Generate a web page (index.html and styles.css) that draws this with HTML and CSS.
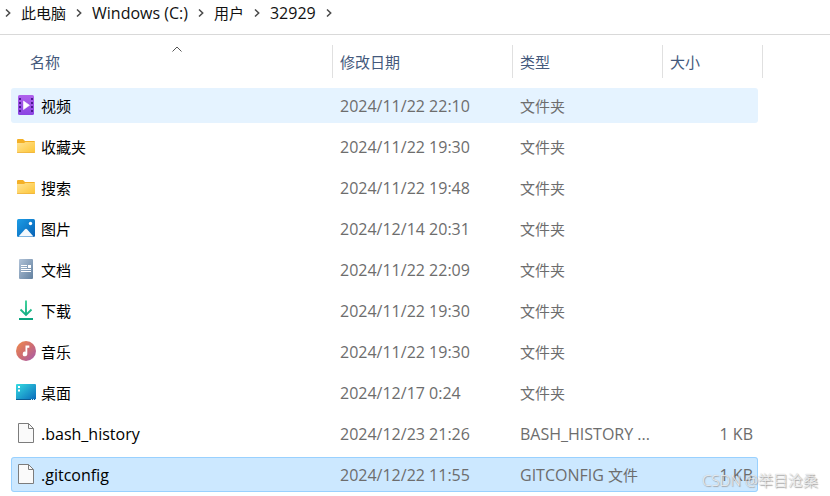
FILE: index.html
```
<!DOCTYPE html>
<html lang="zh-CN">
  <head>
    <meta charset="utf-8" />
    <meta name="viewport" content="width=device-width" />
    <title>32929</title>
    <link rel="stylesheet" href="styles.css">
  </head>
  <body>
    <!-- shared icons and gradients -->
    <svg class="defs" width="0" height="0" aria-hidden="true">
      <defs>
        <linearGradient id="g-video" x2="0" y2="1"><stop stop-color="#b062ec" /><stop offset="1" stop-color="#8b44e2" /></linearGradient>
        <linearGradient id="g-folder" x2="1" y2="1"><stop stop-color="#ffe394" /><stop offset="1" stop-color="#fdc535" /></linearGradient>
        <linearGradient id="g-picture" x2="1" y2="1"><stop stop-color="#1c9de6" /><stop offset="1" stop-color="#0761b5" /></linearGradient>
        <linearGradient id="g-doc" x2="1" y2="1"><stop stop-color="#b1c3d8" /><stop offset="1" stop-color="#62809f" /></linearGradient>
        <linearGradient id="g-down" x2="0" y2="20" gradientUnits="userSpaceOnUse"><stop stop-color="#3bd398" /><stop offset="1" stop-color="#08a27d" /></linearGradient>
        <linearGradient id="g-music" x2="1" y2="1"><stop stop-color="#f08c4c" /><stop offset=".5" stop-color="#cf6d70" /><stop offset="1" stop-color="#a359b0" /></linearGradient>
        <linearGradient id="g-desktop" x2="1" y2="1"><stop stop-color="#36dce2" /><stop offset="1" stop-color="#0869bb" /></linearGradient>
        <symbol id="chevron" viewBox="0 0 6 8"><path d="M1 .5 4.700 4 1 7.500" fill="none" stroke="#4a4a4a" stroke-width="1.500" /></symbol>
        <symbol id="folder" viewBox="0 0 20 20">
          <path d="M1 4a1 1 0 0 1 1-1h5l2 2h9a1 1 0 0 1 1 1v3H1z" fill="#f4b026" />
          <path d="M1 7h7l1.500-1H19v10a1 1 0 0 1-1 1H2a1 1 0 0 1-1-1z" fill="url(#g-folder)" />
          <path d="M1 16.500h18" stroke="#edb03d" stroke-width=".7" />
        </symbol>
        <symbol id="file" viewBox="0 0 20 20">
          <path d="M2.500.5h10l5 5v14h-15z" fill="#fafafa" stroke="#7c7c7c" />
          <path d="M12.500.5v5h5" fill="none" stroke="#7c7c7c" />
        </symbol>
      </defs>
    </svg>

    <nav class="breadcrumb" aria-label="路径">
      <svg><use href="#chevron" /></svg>
      <a href="#" class="cjk">此电脑</a>
      <svg><use href="#chevron" /></svg>
      <a href="#">Windows (C:)</a>
      <svg><use href="#chevron" /></svg>
      <a href="#" class="cjk">用户</a>
      <svg><use href="#chevron" /></svg>
      <a href="#">32929</a>
      <svg><use href="#chevron" /></svg>
    </nav>

    <main>
      <table class="files">
        <colgroup>
          <col>
          <col class="col-date">
          <col class="col-type">
          <col class="col-size">
        </colgroup>
        <thead>
          <tr>
            <th class="head-name" aria-sort="ascending">
              <button type="button">名称
                <svg class="sort" viewBox="0 0 10 6"><path d="M.5 5.500 5 1l4.500 4.500" fill="none" stroke="#555" /></svg>
              </button>
            </th>
            <th><button type="button">修改日期</button></th>
            <th><button type="button">类型</button></th>
            <th class="head-size"><button type="button">大小</button></th>
          </tr>
        </thead>
        <tbody>
          <tr class="hover">
            <td><div class="name">
              <svg viewBox="0 0 20 20">
                <rect x="2" width="16" height="20" rx="1.500" fill="url(#g-video)" />
                <path d="M3 3h2v2H3zm0 4h2v2H3zm0 4h2v2H3zm0 4h2v2H3zM15 3h2v2h-2zm0 4h2v2h-2zm0 4h2v2h-2zm0 4h2v2h-2z" fill="#4c1b91" />
                <path d="M7.500 6v8.500l6-4.200z" fill="#fff" stroke="#fff" stroke-width=".6" stroke-linejoin="round" />
              </svg>
              <span class="cjk">视频</span></div></td>
            <td>2024/11/22 22:10</td>
            <td><span class="cjk">文件夹</span></td>
            <td class="size"></td>
          </tr>
          <tr>
            <td><div class="name"><svg><use href="#folder" /></svg><span class="cjk">收藏夹</span></div></td>
            <td>2024/11/22 19:30</td>
            <td><span class="cjk">文件夹</span></td>
            <td class="size"></td>
          </tr>
          <tr>
            <td><div class="name"><svg><use href="#folder" /></svg><span class="cjk">搜索</span></div></td>
            <td>2024/11/22 19:48</td>
            <td><span class="cjk">文件夹</span></td>
            <td class="size"></td>
          </tr>
          <tr>
            <td><div class="name">
              <svg viewBox="0 0 20 20">
                <rect x="1" y="1" width="18" height="18" rx="1.500" fill="url(#g-picture)" />
                <path d="M2.500 18.500 9 11.200q1-.9 2 0l6.500 7.300z" fill="#f3f8fd" />
                <circle cx="14.500" cy="5.500" r="1.700" fill="#fff" />
              </svg>
              <span class="cjk">图片</span></div></td>
            <td>2024/12/14 20:31</td>
            <td><span class="cjk">文件夹</span></td>
            <td class="size"></td>
          </tr>
          <tr>
            <td><div class="name">
              <svg viewBox="0 0 20 20">
                <rect x="3" width="14" height="20" rx="1" fill="url(#g-doc)" />
                <path d="M5 6.500h6M5 8.500h6M5 10.500h10M5 12.500h10" stroke="#fff" />
                <path d="M12 6h3v3h-3z" fill="#fff" />
              </svg>
              <span class="cjk">文档</span></div></td>
            <td>2024/11/22 22:09</td>
            <td><span class="cjk">文件夹</span></td>
            <td class="size"></td>
          </tr>
          <tr>
            <td><div class="name">
              <svg viewBox="0 0 20 20">
                <path d="M10 .5v14M4.500 9.500l5.500 5.500 5.500-5.500M3 19h14" fill="none" stroke="url(#g-down)" stroke-width="1.900" />
              </svg>
              <span class="cjk">下载</span></div></td>
            <td>2024/11/22 19:30</td>
            <td><span class="cjk">文件夹</span></td>
            <td class="size"></td>
          </tr>
          <tr>
            <td><div class="name">
              <svg viewBox="0 0 20 20">
                <circle cx="10" cy="10" r="10" fill="url(#g-music)" />
                <path d="M9.500 4.500h3.800v2.300h-2v6a2.300 2.300 0 1 1-1.800-2.100z" fill="#fff" />
              </svg>
              <span class="cjk">音乐</span></div></td>
            <td>2024/11/22 19:30</td>
            <td><span class="cjk">文件夹</span></td>
            <td class="size"></td>
          </tr>
          <tr>
            <td><div class="name">
              <svg viewBox="0 0 20 20">
                <rect y="2" width="20" height="16" rx="1" fill="url(#g-desktop)" />
                <path d="M2 4h2v2H2zm0 3.500h2v2H2z" fill="#fff" />
                <path d="M0 17h20v.5a.5.5 0 0 1-.5.5H.5a.5.5 0 0 1-.5-.5z" fill="#0c5c95" />
                <path d="M15 17.500h1m1 0h1m1 0h1" stroke="#cdefff" />
              </svg>
              <span class="cjk">桌面</span></div></td>
            <td>2024/12/17 0:24</td>
            <td><span class="cjk">文件夹</span></td>
            <td class="size"></td>
          </tr>
          <tr>
            <td><div class="name"><svg><use href="#file" /></svg>.bash_history</div></td>
            <td>2024/12/23 21:26</td>
            <td>BASH_HISTORY ...</td>
            <td class="size">1 KB</td>
          </tr>
          <tr class="selected">
            <td><div class="name"><svg><use href="#file" /></svg>.gitconfig</div></td>
            <td>2024/12/22 11:55</td>
            <td>GITCONFIG <span class="cjk">文件</span></td>
            <td class="size">1 KB</td>
          </tr>
        </tbody>
      </table>
      <div class="watermark">CSDN @举目沧桑</div>
    </main>
  </body>
</html>
```
FILE: styles.css
```
* {
  box-sizing: border-box;
}
body {
  margin: 0;
  background: #fff;
  color: #000;
  font: 16px/22px "Open Sans", "Noto Sans CJK SC", sans-serif;
}
.cjk {
  font-size: 15px;
}
.defs {
  position: absolute;
}

/* path bar */
.breadcrumb {
  display: flex;
  align-items: center;
  gap: 10px;
  height: 35px;
  padding: 0 5px 9px;
  border-bottom: 1px solid #d9d9d9;
}
.breadcrumb svg {
  width: 6px;
  height: 8px;
}
.breadcrumb a {
  color: #111;
  text-decoration: none;
}

main {
  position: relative;
  padding: 4px 72px 4px 11px;
}

/* file list */
.files {
  width: 100%;
  table-layout: fixed;
  border-spacing: 0 6px;
}
.col-date {
  width: 180px;
}
.col-type {
  width: 150px;
}
.col-size {
  width: 95px;
}
.files th {
  padding: 0 0 4px;
  font-weight: 400;
  vertical-align: top;
}
.files th button {
  display: block;
  position: relative;
  width: 100%;
  height: 33px;
  padding: 0 7px;
  border: 0;
  border-right: 1px solid #e0e0e0;
  background: none;
  color: #44597c;
  font: inherit;
  font-size: 15px;
  text-align: left;
}
.files .head-name {
  padding-left: 11px;
}
.files .head-name button {
  padding-left: 8px;
}
.files .head-size button {
  width: calc(100% + 5px);
}
.sort {
  position: absolute;
  top: 1px;
  left: 50%;
  width: 10px;
  height: 6px;
  margin-left: -5px;
}
.files td {
  height: 35px;
  padding: 7px 7px 6px;
  color: #6d6d6d;
  white-space: nowrap;
}
.files td:first-child {
  padding-left: 5px;
  border-radius: 3px 0 0 3px;
  color: #000;
}
.files td:last-child {
  border-radius: 0 3px 3px 0;
}
.files .size {
  padding-right: 5px;
  text-align: right;
}
.name {
  display: flex;
  gap: 5px;
}
.name svg {
  flex: none;
  width: 20px;
  height: 20px;
}
.hover td {
  background: #e5f3ff;
}
.selected {
  border-radius: 3px;
  outline: 1px solid #99d1ff;
  outline-offset: -1px;
}
.selected td {
  background: #cce8ff;
}

.watermark {
  position: absolute;
  right: 12px;
  bottom: 11px;
  color: rgba(255, 255, 255, 0.8);
  font-size: 15px;
  font-weight: 300;
  text-shadow: 1px 1px 1px #999, 0 0 1px #aaa;
}
```
